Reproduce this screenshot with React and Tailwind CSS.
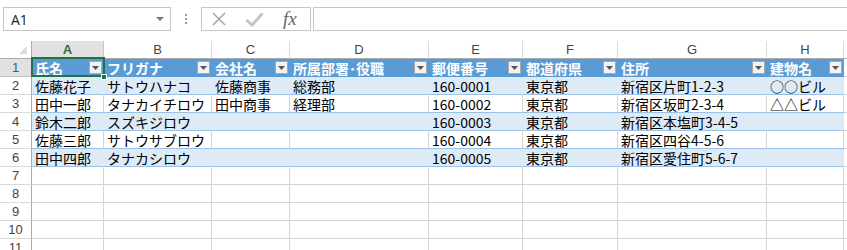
import React from "react";

const cols = [
  { key: "A", w: "w-[72px]" },
  { key: "B", w: "w-[108px]" },
  { key: "C", w: "w-[78px]" },
  { key: "D", w: "w-[139px]" },
  { key: "E", w: "w-[94px]" },
  { key: "F", w: "w-[95px]" },
  { key: "G", w: "w-[149px]" },
  { key: "H", w: "w-[77px]" },
];

const headers = ["氏名", "フリガナ", "会社名", "所属部署･役職", "郵便番号", "都道府県", "住所", "建物名"];

const rows = [
  ["佐藤花子", "サトウハナコ", "佐藤商事", "総務部", "160-0001", "東京都", "新宿区片町1-2-3", "○○ビル"],
  ["田中一郎", "タナカイチロウ", "田中商事", "経理部", "160-0002", "東京都", "新宿区坂町2-3-4", "△△ビル"],
  ["鈴木二郎", "スズキジロウ", "", "", "160-0003", "東京都", "新宿区本塩町3-4-5", ""],
  ["佐藤三郎", "サトウサブロウ", "", "", "160-0004", "東京都", "新宿区四谷4-5-6", ""],
  ["田中四郎", "タナカシロウ", "", "", "160-0005", "東京都", "新宿区愛住町5-6-7", ""],
];

const cellFont = { fontFamily: '"Noto Sans CJK JP", "Noto Sans", sans-serif' };
const headFont = { fontFamily: '"Liberation Sans", Arial, sans-serif' };

// little grey filter arrow button in table header cells
const FilterButton = () => (
  <div className="w-[13px] h-[13px] shrink-0 bg-[#f3f3f3] border border-[#a9a9a9] flex items-center justify-center">
    <svg width="7" height="4" viewBox="0 0 7 4">
      <path d="M0 0 L7 0 L3.5 4 Z" fill="#555" />
    </svg>
  </div>
);

const FormulaBar = () => (
  <div className="h-[41px] flex items-start pt-[7px] bg-white">
    {/* Name box */}
    <div className="ml-[3px] w-[168px] h-[24px] border border-[#c6c6c6] flex items-center justify-between pl-[7px] pr-[6px]">
      <span className="text-[14px] text-[#222]" style={{ fontFamily: '"Open Sans", "Liberation Sans", sans-serif' }}>
        A1
      </span>
      <svg width="8" height="4" viewBox="0 0 8 4">
        <path d="M0 0 L8 0 L4 4 Z" fill="#777" />
      </svg>
    </div>

    {/* Dots */}
    <div className="w-[30px] h-[24px] flex flex-col items-center justify-center gap-[2px]">
      <div className="w-[2px] h-[2px] bg-[#9a9a9a]" />
      <div className="w-[2px] h-[2px] bg-[#9a9a9a]" />
      <div className="w-[2px] h-[2px] bg-[#9a9a9a]" />
    </div>

    {/* Cancel / Enter / fx */}
    <div className="w-[110px] h-[24px] border border-[#c6c6c6] flex items-center pl-[10px] gap-[19px]">
      <svg width="14" height="14" viewBox="0 0 14 14">
        <path d="M1 1 L13 13 M13 1 L1 13" stroke="#a8a8a8" strokeWidth="1.6" fill="none" />
      </svg>
      <svg width="19" height="15" viewBox="0 0 19 15">
        <path d="M1.5 8 L7 13 L17.5 1.5" stroke="#c4c4c4" strokeWidth="3" fill="none" />
      </svg>
      <span
        className="text-[19px] italic text-[#666] leading-none -mt-[2px]"
        style={{ fontFamily: '"Liberation Serif", "DejaVu Serif", serif' }}
      >
        fx
      </span>
    </div>

    {/* Formula input */}
    <div className="ml-[2px] flex-1 h-[24px] border border-[#c6c6c6] border-r-0" />
  </div>
);

const ColumnHeaders = () => (
  <div className="flex h-[18px]" style={headFont}>
    <div className="w-[32px] shrink-0 border-r border-b border-[#ababab] flex items-end justify-end pr-[4px] pb-[4px]">
      <svg width="8" height="8" viewBox="0 0 8 8">
        <path d="M8 0 L8 8 L0 8 Z" fill="#dcdcdc" />
      </svg>
    </div>
    {cols.map((c, i) => (
      <div
        key={c.key}
        className={`${c.w} shrink-0 border-r border-b flex items-center justify-center text-[13px] leading-none ${
          i === 0
            ? "bg-[#e1e1e1] text-[#217346] font-bold border-r-[#c6c6c6] border-b-[#217346]"
            : "bg-white text-[#444] border-r-[#dadada] border-b-[#ababab]"
        }`}
      >
        {c.key}
      </div>
    ))}
    <div className="flex-1 border-b border-[#ababab]" />
  </div>
);

const RowHeader = ({ n }) => (
  <div
    className={`w-[32px] shrink-0 border-r border-b flex items-center justify-center text-[13px] leading-none ${
      n === 1
        ? "bg-[#e1e1e1] text-[#217346] border-r-[#217346] border-b-[#c6c6c6]"
        : "bg-white text-[#444] border-r-[#ababab] border-b-[#dadada]"
    }`}
    style={headFont}
  >
    {n}
  </div>
);

const HeaderRow = () => (
  <div className="flex h-[18px]">
    <RowHeader n={1} />
    {cols.map((c, i) => (
      <div
        key={c.key}
        className={`${c.w} shrink-0 bg-[#5b9bd5] border-r border-b border-[#5b9bd5] flex items-center justify-between pl-[3px] pr-[1px] overflow-hidden`}
      >
        <span className="text-[14px] font-bold text-white whitespace-nowrap leading-none" style={cellFont}>
          {headers[i]}
        </span>
        <FilterButton />
      </div>
    ))}
    <div className="flex-1 border-b border-[#d4d4d4]" />
  </div>
);

const DataRow = ({ n, values }) => {
  const banded = n % 2 === 0;
  return (
    <div className="flex h-[18px]">
      <RowHeader n={n} />
      {cols.map((c, i) => (
        <div
          key={c.key}
          className={`${c.w} shrink-0 border-r border-b border-b-[#9bc2e6] flex items-center pl-[3px] overflow-hidden ${
            banded ? "bg-[#ddebf7] border-r-[#ddebf7]" : "bg-white border-r-[#d4d4d4]"
          }`}
        >
          <span className="text-[14px] text-black whitespace-nowrap leading-none" style={cellFont}>
            {values[i]}
          </span>
        </div>
      ))}
      <div className="flex-1 border-b border-[#d4d4d4]" />
    </div>
  );
};

const EmptyRow = ({ n }) => (
  <div className="flex h-[18px]">
    <RowHeader n={n} />
    {cols.map((c) => (
      <div key={c.key} className={`${c.w} shrink-0 border-r border-b border-[#d4d4d4] bg-white`} />
    ))}
    <div className="flex-1 border-b border-[#d4d4d4]" />
  </div>
);

export default function App() {
  return (
    <div className="w-[847px] h-[250px] overflow-hidden bg-white relative select-none">
      <FormulaBar />
      <ColumnHeaders />
      <HeaderRow />
      {rows.map((r, i) => (
        <DataRow key={i} n={i + 2} values={r} />
      ))}
      {[7, 8, 9, 10, 11].map((n) => (
        <EmptyRow key={n} n={n} />
      ))}

      {/* active cell selection on A1 */}
      <div className="absolute left-[31px] top-[57px] w-[74px] h-[20px] border-2 border-[#217346] pointer-events-none" />
      <div className="absolute left-[101px] top-[74px] w-[6px] h-[6px] bg-[#217346] border border-white pointer-events-none" />
    </div>
  );
}
